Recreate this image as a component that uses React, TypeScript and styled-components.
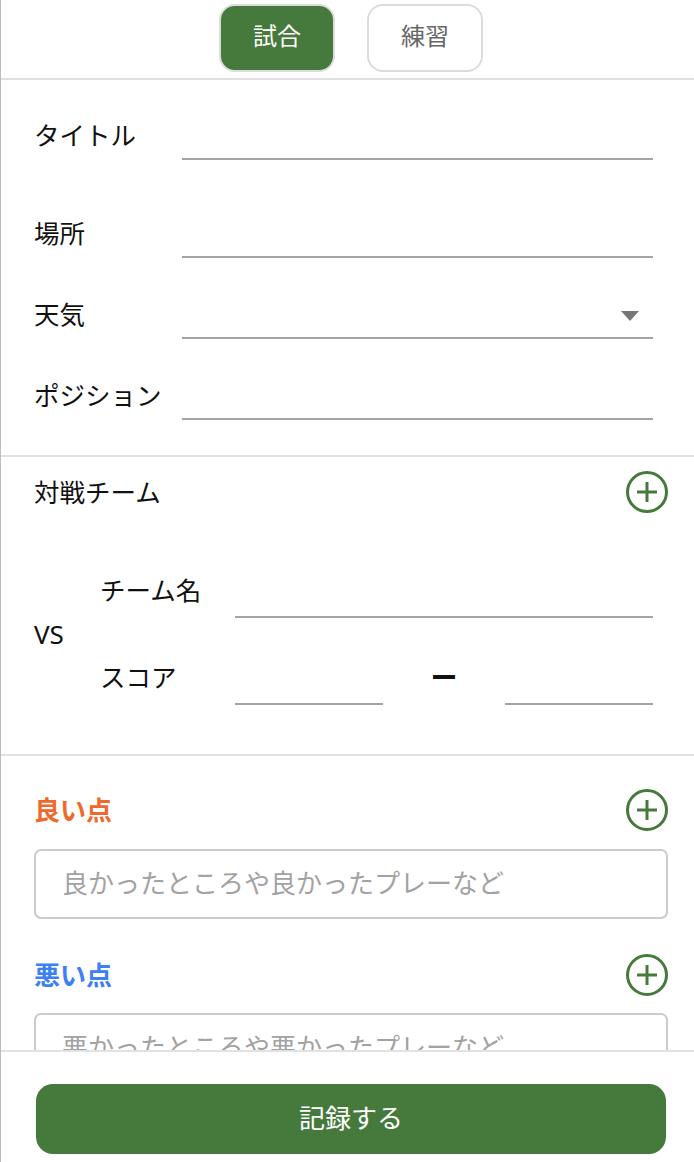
import React from "react";
import styled, { createGlobalStyle } from "styled-components";

const GREEN = "#467a3c";

const Global = createGlobalStyle`
  html, body { margin: 0; padding: 0; background: #fff; }
  body {
    font-family: "Noto Sans CJK JP", "Noto Sans", sans-serif;
    color: #111;
  }
  * { box-sizing: border-box; }
`;

const Page = styled.div`
  position: relative;
  height: 1162px;
  overflow: hidden;
  border-left: 1px solid #bdbdbd;
`;

const TabBar = styled.div`
  display: flex;
  justify-content: center;
  gap: 32px;
  padding: 4px 0 6px 7px;
  border-bottom: 2px solid #e0e0e0;
`;

const Tab = styled.button<{ $active?: boolean }>`
  width: 116px;
  height: 68px;
  border-radius: 16px;
  border: 2px solid #dcdcdc;
  background: ${(p) => (p.$active ? GREEN : "#fff")};
  color: ${(p) => (p.$active ? "#fff" : "#666")};
  font-family: inherit;
  font-size: 24px;
  line-height: 1;
  padding: 0 0 6px;
`;

const Section = styled.section<{ $pad: string; $divider?: boolean }>`
  padding: ${(p) => p.$pad};
  border-bottom: ${(p) => (p.$divider ? "2px solid #e2e2e2" : "none")};
`;

const FieldRow = styled.div<{ $mt?: number }>`
  display: flex;
  align-items: center;
  height: 50px;
  margin-top: ${(p) => p.$mt ?? 0}px;
`;

const Label = styled.div<{ $w: number }>`
  width: ${(p) => p.$w}px;
  flex: none;
  font-size: 25.5px;
  line-height: 1;
  white-space: nowrap;
  padding-bottom: 3px;
`;

const Line = styled.div`
  position: relative;
  flex: 1;
  align-self: stretch;
  border-bottom: 2px solid #a3a3a3;
`;

const Caret = styled.span`
  position: absolute;
  right: 14px;
  top: 22px;
  width: 0;
  height: 0;
  border-left: 9px solid transparent;
  border-right: 9px solid transparent;
  border-top: 10px solid #777;
`;

const HeaderRow = styled.div`
  display: flex;
  align-items: center;
  justify-content: space-between;
  height: 42px;
`;

const Heading = styled.div<{ $color?: string; $bold?: boolean }>`
  font-size: ${(p) => (p.$bold ? 26 : 25.5)}px;
  line-height: 1;
  color: ${(p) => p.$color ?? "#111"};
  font-weight: ${(p) => (p.$bold ? 700 : 400)};
  padding-bottom: 3px;
`;

const PlusBtn = styled.button`
  width: 42px;
  height: 42px;
  padding: 0;
  border: none;
  background: none;
  display: flex;
`;

const VsBlock = styled.div`
  display: flex;
  align-items: center;
  margin-top: 49px;
`;

const VsLabel = styled.div`
  width: 66px;
  font-size: 26px;
  line-height: 1;
  font-family: "Noto Sans", "Noto Sans CJK JP", sans-serif;
`;

const VsFields = styled.div`
  flex: 1;
  display: flex;
  flex-direction: column;
  gap: 31px;
`;

const VsRow = styled.div`
  display: flex;
  align-items: center;
  height: 56px;
`;

const ScoreWrap = styled.div`
  flex: 1;
  display: flex;
  align-self: stretch;
  align-items: center;
`;

const Dash = styled.div`
  width: 122px;
  text-align: center;
  font-size: 27px;
  font-weight: 700;
  line-height: 1;
  padding-bottom: 2px;
`;

const NoteBox = styled.div<{ $mt: number }>`
  margin-top: ${(p) => p.$mt}px;
  height: 70px;
  border: 2px solid #cbcbcb;
  border-radius: 7px;
  padding: 0 26px 5px;
  display: flex;
  align-items: center;
  font-size: 26px;
  color: #a2a2a2;
  white-space: nowrap;
  overflow: hidden;
`;

const Footer = styled.div`
  position: absolute;
  left: 0;
  right: 0;
  bottom: 0;
  height: 112px;
  background: #fff;
  border-top: 2px solid #e2e2e2;
  padding: 32px 28px 8px 35px;
`;

const Submit = styled.button`
  width: 100%;
  height: 70px;
  border: none;
  border-radius: 17px;
  background: ${GREEN};
  color: #fff;
  font-family: inherit;
  font-size: 26px;
  line-height: 1;
  padding: 0 0 4px;
`;

const PlusIcon = () => (
  <svg width="42" height="42" viewBox="0 0 42 42">
    <circle cx="21" cy="21" r="19.5" fill="none" stroke={GREEN} strokeWidth="3" />
    <path d="M21 11v20M11 21h20" stroke={GREEN} strokeWidth="3" fill="none" />
  </svg>
);

export default function App() {
  return (
    <Page>
      <Global />
      <TabBar>
        <Tab $active>試合</Tab>
        <Tab>練習</Tab>
      </TabBar>

      <Section $pad="30px 41px 35px 33px" $divider>
        <FieldRow>
          <Label $w={148}>タイトル</Label>
          <Line />
        </FieldRow>
        <FieldRow $mt={48}>
          <Label $w={148}>場所</Label>
          <Line />
        </FieldRow>
        <FieldRow $mt={31}>
          <Label $w={148}>天気</Label>
          <Line>
            <Caret />
          </Line>
        </FieldRow>
        <FieldRow $mt={31}>
          <Label $w={148}>ポジション</Label>
          <Line />
        </FieldRow>
      </Section>

      <Section $pad="14px 26px 49px 33px" $divider>
        <HeaderRow>
          <Heading>対戦チーム</Heading>
          <PlusBtn aria-label="追加">
            <PlusIcon />
          </PlusBtn>
        </HeaderRow>
        <VsBlock>
          <VsLabel>VS</VsLabel>
          <VsFields>
            <VsRow>
              <Label $w={135}>チーム名</Label>
              <Line style={{ marginRight: 15 }} />
            </VsRow>
            <VsRow>
              <Label $w={135}>スコア</Label>
              <ScoreWrap style={{ marginRight: 15 }}>
                <Line />
                <Dash>ー</Dash>
                <Line />
              </ScoreWrap>
            </VsRow>
          </VsFields>
        </VsBlock>
      </Section>

      <Section $pad="33px 26px 0 33px">
        <HeaderRow>
          <Heading $color="#ee6a2c" $bold>良い点</Heading>
          <PlusBtn aria-label="追加">
            <PlusIcon />
          </PlusBtn>
        </HeaderRow>
        <NoteBox $mt={18}>良かったところや良かったプレーなど</NoteBox>
        <HeaderRow style={{ marginTop: 35 }}>
          <Heading $color="#3d80f3" $bold>悪い点</Heading>
          <PlusBtn aria-label="追加">
            <PlusIcon />
          </PlusBtn>
        </HeaderRow>
        <NoteBox $mt={17}>悪かったところや悪かったプレーなど</NoteBox>
      </Section>

      <Footer>
        <Submit>記録する</Submit>
      </Footer>
    </Page>
  );
}
